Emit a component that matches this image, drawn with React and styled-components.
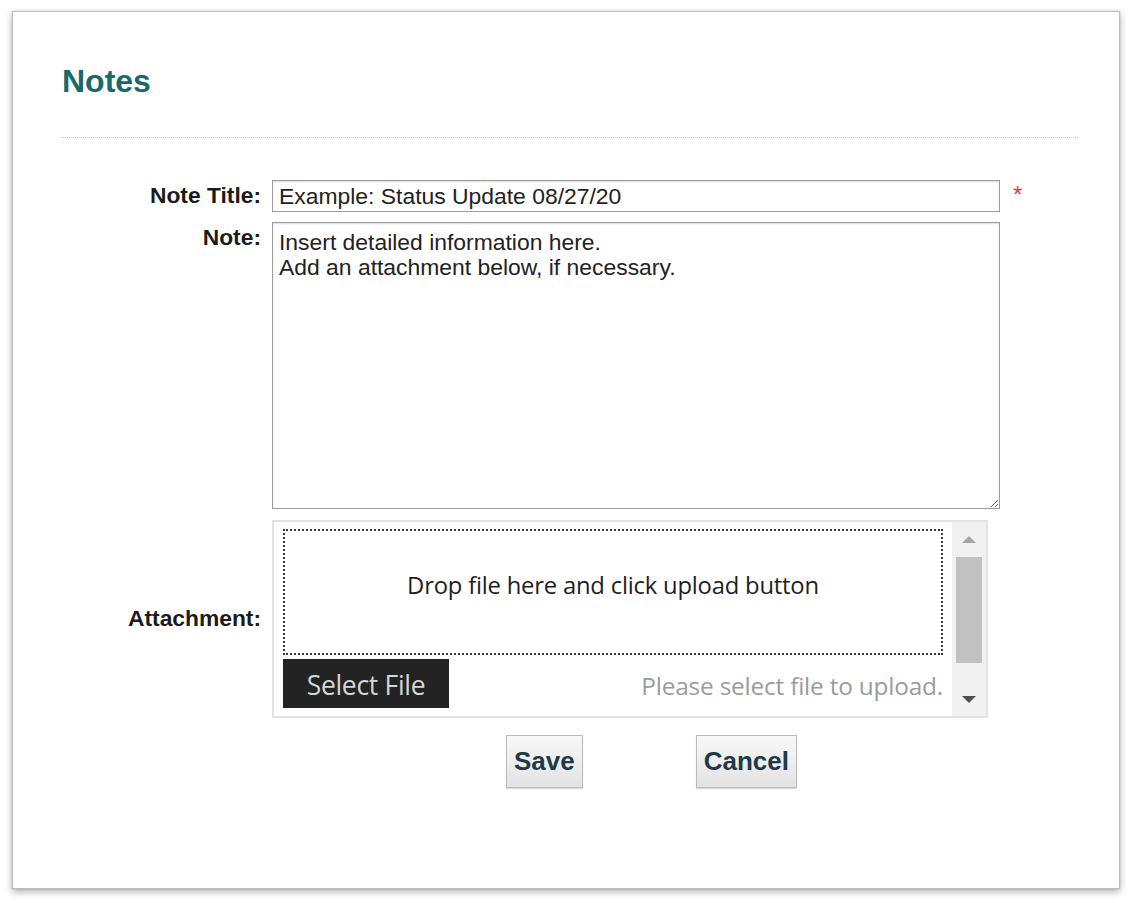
import React from 'react';
import styled, { createGlobalStyle } from 'styled-components';

const GlobalStyle = createGlobalStyle`
  body {
    margin: 0;
    background: #ffffff;
    font-family: "Liberation Sans", Arial, sans-serif;
  }
`;

const Page = styled.div`
  padding: 11px 12px 14px 12px;
`;

const Card = styled.div`
  background: #fff;
  border: 1px solid #bdbdbd;
  box-shadow: 0 3px 7px rgba(0, 0, 0, 0.3), 0 0 2px rgba(0, 0, 0, 0.12);
  padding: 53px 41px 99px 48px;
  height: 878px;
  box-sizing: border-box;
`;

const Heading = styled.h1`
  margin: 0 0 0 1px;
  font-size: 32px;
  line-height: 1;
  font-weight: bold;
  color: #176a6c;
`;

const Divider = styled.hr`
  margin: 40px 0 0 0;
  border: none;
  border-top: 1px dotted #c9c9c9;
  height: 0;
`;

const Form = styled.div`
  display: grid;
  grid-template-columns: 200px 728px auto;
  column-gap: 11px;
  row-gap: 10px;
  margin-top: 42px;
  font-size: 22.8px;
`;

const Label = styled.label`
  justify-self: end;
  align-self: ${p => p.$align || 'start'};
  font-weight: bold;
  color: #1b1b1b;
  padding-top: ${p => p.$top || 0}px;
`;

const fieldBase = `
  box-sizing: border-box;
  width: 100%;
  border: 1px solid #9c9c9c;
  box-shadow: inset 0 1px 2px rgba(0, 0, 0, 0.14);
  background: #fff;
  color: #222;
  font-family: "Liberation Sans", Arial, sans-serif;
  font-size: 22.9px;
  padding: 2px 6px;
  outline: none;
`;

const TextInput = styled.input`
  ${fieldBase}
  height: 32px;
`;

const TextArea = styled.textarea`
  ${fieldBase}
  height: 287px;
  padding: 7px 6px 5px 6px;
  resize: both;
  line-height: 1.1;
`;

const Required = styled.span`
  color: #e23b3b;
  font-size: 24px;
  line-height: 1;
  margin-left: 2px;
  padding-top: 3px;
`;

const Empty = styled.span``;

const Uploader = styled.div`
  box-sizing: border-box;
  width: 716px;
  height: 198px;
  border: 2px solid #e3e3e3;
  display: flex;
  margin-top: 1px;
`;

const UploadBody = styled.div`
  flex: 1;
  display: flex;
  flex-direction: column;
  padding: 7px 9px 7px 9px;
  font-family: "Open Sans", "Noto Sans", sans-serif;
`;

const DropZone = styled.div`
  height: 126px;
  box-sizing: border-box;
  border: 2px dotted #3a3a3a;
  display: flex;
  align-items: center;
  justify-content: center;
  padding-bottom: 14px;
  font-size: 23.8px;
  letter-spacing: -0.2px;
  color: #1e1e1e;
`;

const UploadFooter = styled.div`
  display: flex;
  align-items: center;
  justify-content: space-between;
  margin-top: 4px;
`;

const SelectButton = styled.button`
  width: 166px;
  height: 49px;
  padding-top: 3px;
  background: #232323;
  color: #d6d6d6;
  border: none;
  font-family: "Open Sans", "Noto Sans", sans-serif;
  font-size: 26.5px;
  letter-spacing: -0.3px;
  cursor: pointer;
`;

const Status = styled.span`
  color: #9b9b9b;
  font-size: 24.4px;
  letter-spacing: -0.2px;
  padding-top: 3px;
`;

const Scrollbar = styled.div`
  width: 34px;
  background: #f1f1f1;
  display: flex;
  flex-direction: column;
  align-items: center;
`;

const Arrow = styled.div`
  width: 0;
  height: 0;
  border-left: 7px solid transparent;
  border-right: 7px solid transparent;
  ${p => p.$down
    ? `border-top: 7px solid #505050; margin-top: auto; margin-bottom: 13px;`
    : `border-bottom: 7px solid #a5a5a5; margin-top: 14px;`}
`;

const Thumb = styled.div`
  width: 26px;
  height: 106px;
  background: #c1c1c1;
  margin-top: 14px;
`;

const Actions = styled.div`
  display: flex;
  gap: 113px;
  padding-left: 234px;
  margin-top: 7px;
`;

const ActionButton = styled.button`
  height: 53px;
  padding: 0 7px;
  background: linear-gradient(#f8f8f8, #e3e3e3);
  border: 1px solid #bcbcbc;
  box-shadow: 0 1px 1px rgba(0, 0, 0, 0.15);
  color: #1e3a46;
  font-family: "Liberation Sans", Arial, sans-serif;
  font-size: 26px;
  font-weight: bold;
  cursor: pointer;
`;

export default function App() {
  return (
    <>
      <GlobalStyle />
      <Page>
        <Card>
          <Heading>Notes</Heading>
          <Divider />
          <Form>
            <Label $top={2}>Note Title:</Label>
            <TextInput defaultValue="Example: Status Update 08/27/20" />
            <Required>*</Required>

            <Label $top={2}>Note:</Label>
            <TextArea
              defaultValue={'Insert detailed information here.\nAdd an attachment below, if necessary.'}
            />
            <Empty />

            <Label $align="center">Attachment:</Label>
            <Uploader>
              <UploadBody>
                <DropZone>Drop file here and click upload button</DropZone>
                <UploadFooter>
                  <SelectButton>Select File</SelectButton>
                  <Status>Please select file to upload.</Status>
                </UploadFooter>
              </UploadBody>
              <Scrollbar>
                <Arrow />
                <Thumb />
                <Arrow $down />
              </Scrollbar>
            </Uploader>
            <Empty />

            <Empty />
            <Actions>
              <ActionButton>Save</ActionButton>
              <ActionButton>Cancel</ActionButton>
            </Actions>
            <Empty />
          </Form>
        </Card>
      </Page>
    </>
  );
}
